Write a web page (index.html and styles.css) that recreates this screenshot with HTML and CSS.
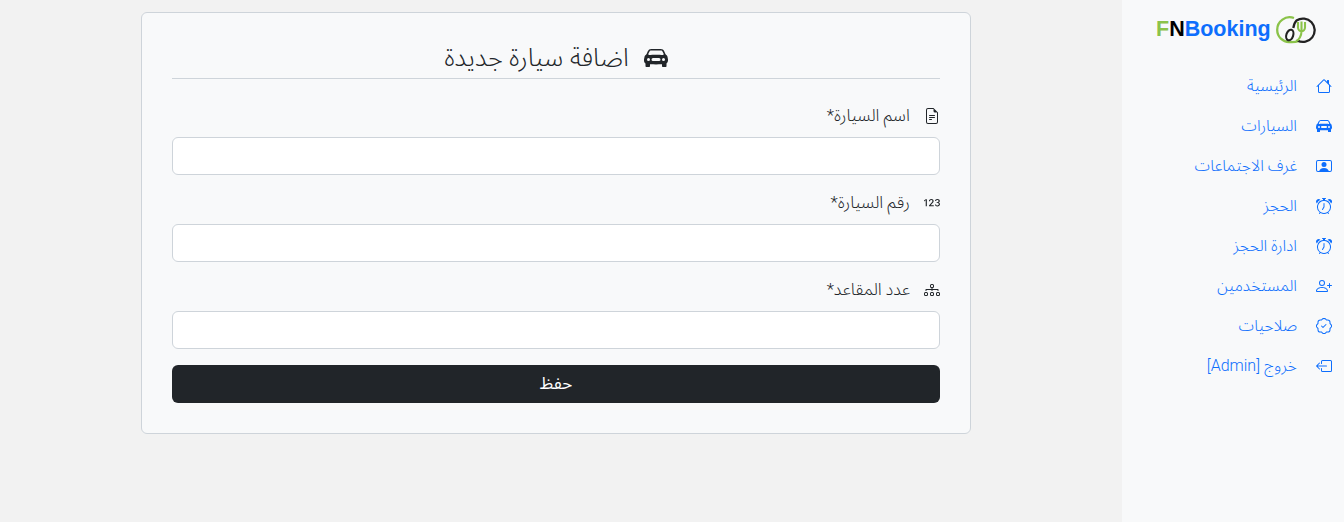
FILE: index.html
```html
<!DOCTYPE html>
<html lang="ar" dir="rtl">
<head>
<meta charset="utf-8">
<title>اضافة سيارة جديدة</title>
<link rel="stylesheet" href="styles.css">
</head>
<body>
<div class="app">
  <aside class="sidebar">
    <div class="brand" dir="ltr">
      <span class="brand-text"><span class="f">F</span><span class="n">N</span><span class="b">Booking</span></span>
      <svg class="brand-logo" viewBox="0 0 40 28" width="40" height="28">
        <path d="M18 2A12.500 12.500 0 0 0 1.200 14C1.200 21 7 26 13 26C17 26.500 20 26 23.500 25" fill="none" stroke="#8bc34a" stroke-width="2.300"/>
        <path d="M21.500 24.600A11.700 11.700 0 1 0 20.500 4.500C18.500 6.500 17.800 9 17.300 12" fill="none" stroke="#222" stroke-width="2.300"/>
        <ellipse cx="13.800" cy="19" rx="3.400" ry="5.400" transform="rotate(18 13.800 19)" fill="none" stroke="#222" stroke-width="2.100"/>
        <path d="M22 6v5.500c0 2.200 1.800 3.600 3.500 3.600s3.500-1.400 3.500-3.600V6M25.500 5.500v9.500C25.500 20 23 24 20 25" fill="none" stroke="#8bc34a" stroke-width="2.100"/>
      </svg>
    </div>
    <nav class="menu">
      <a class="menu-item" href="#"><svg class="ico" viewBox="0 0 16 16"><path d="M8.707 1.5a1 1 0 0 0-1.414 0L.646 8.146a.5.5 0 0 0 .708.708L2 8.207V13.5A1.5 1.5 0 0 0 3.5 15h9a1.5 1.5 0 0 0 1.5-1.5V8.207l.646.647a.5.5 0 0 0 .708-.708L13 5.793V2.5a.5.5 0 0 0-.5-.5h-1a.5.5 0 0 0-.5.5v1.293L8.707 1.5ZM13 7.207V13.5a.5.5 0 0 1-.5.5h-9a.5.5 0 0 1-.5-.5V7.207l5-5 5 5Z"/></svg><span>الرئيسية</span></a>
      <a class="menu-item" href="#"><svg class="ico" viewBox="0 0 16 16"><path d="M2.52 3.515A2.5 2.5 0 0 1 4.82 2h6.362c1 0 1.904.596 2.298 1.515l.792 1.848c.075.175.21.319.38.404.5.25.855.715.965 1.262l.335 1.679c.033.161.049.325.049.49v.413c0 .814-.39 1.543-1 1.997V13.5a.5.5 0 0 1-.5.5h-2a.5.5 0 0 1-.5-.5v-1.338c-1.292.048-2.745.088-4 .088s-2.708-.04-4-.088V13.5a.5.5 0 0 1-.5.5h-2a.5.5 0 0 1-.5-.5v-1.892c-.61-.454-1-1.183-1-1.997v-.413a2.5 2.5 0 0 1 .049-.49l.335-1.68c.11-.546.465-1.012.964-1.261a.807.807 0 0 0 .381-.404l.792-1.848ZM3 10a1 1 0 1 0 0-2 1 1 0 0 0 0 2Zm10 0a1 1 0 1 0 0-2 1 1 0 0 0 0 2ZM6 8a1 1 0 0 0 0 2h4a1 1 0 1 0 0-2H6ZM2.906 5.189a.51.51 0 0 0 .497.731c.91-.073 3.35-.17 4.597-.17 1.247 0 3.688.097 4.597.17a.51.51 0 0 0 .497-.731l-.956-1.913A.5.5 0 0 0 11.691 3H4.309a.5.5 0 0 0-.447.276L2.906 5.19Z"/></svg><span>السيارات</span></a>
      <a class="menu-item" href="#"><svg class="ico" viewBox="0 0 16 16"><path d="M8 9.05a2.5 2.5 0 1 0 0-5 2.5 2.5 0 0 0 0 5Z"/><path d="M2 2a2 2 0 0 0-2 2v8a2 2 0 0 0 2 2h12a2 2 0 0 0 2-2V4a2 2 0 0 0-2-2H2Zm10.798 11c-.453-1.27-1.76-3-4.798-3-3.037 0-4.345 1.73-4.798 3H2a1 1 0 0 1-1-1V4a1 1 0 0 1 1-1h12a1 1 0 0 1 1 1v8a1 1 0 0 1-1 1h-1.202Z"/></svg><span>غرف الاجتماعات</span></a>
      <a class="menu-item" href="#"><svg class="ico" viewBox="0 0 16 16"><path d="M8.5 5.5a.5.5 0 0 0-1 0v3.362l-1.429 2.38a.5.5 0 1 0 .858.515l1.5-2.5A.5.5 0 0 0 8.5 9V5.5z"/><path d="M6.5 0a.5.5 0 0 0 0 1H7v1.07a7.001 7.001 0 0 0-3.273 12.474l-.602.602a.5.5 0 0 0 .707.708l.746-.746A6.97 6.97 0 0 0 8 16a6.97 6.97 0 0 0 3.422-.892l.746.746a.5.5 0 0 0 .707-.708l-.601-.602A7.001 7.001 0 0 0 9 2.07V1h.5a.5.5 0 0 0 0-1h-3zm1.038 3.018a6.093 6.093 0 0 1 .924 0 6 6 0 1 1-.924 0zM0 3.5c0 .753.333 1.429.86 1.887A8.035 8.035 0 0 1 4.387 1.86 2.5 2.5 0 0 0 0 3.5zM13.5 1c-.753 0-1.429.333-1.887.86a8.035 8.035 0 0 1 3.527 3.527A2.5 2.5 0 0 0 13.5 1z"/></svg><span>الحجز</span></a>
      <a class="menu-item" href="#"><svg class="ico" viewBox="0 0 16 16"><path d="M8.5 5.5a.5.5 0 0 0-1 0v3.362l-1.429 2.38a.5.5 0 1 0 .858.515l1.5-2.5A.5.5 0 0 0 8.5 9V5.5z"/><path d="M6.5 0a.5.5 0 0 0 0 1H7v1.07a7.001 7.001 0 0 0-3.273 12.474l-.602.602a.5.5 0 0 0 .707.708l.746-.746A6.97 6.97 0 0 0 8 16a6.97 6.97 0 0 0 3.422-.892l.746.746a.5.5 0 0 0 .707-.708l-.601-.602A7.001 7.001 0 0 0 9 2.07V1h.5a.5.5 0 0 0 0-1h-3zm1.038 3.018a6.093 6.093 0 0 1 .924 0 6 6 0 1 1-.924 0zM0 3.5c0 .753.333 1.429.86 1.887A8.035 8.035 0 0 1 4.387 1.86 2.5 2.5 0 0 0 0 3.5zM13.5 1c-.753 0-1.429.333-1.887.86a8.035 8.035 0 0 1 3.527 3.527A2.5 2.5 0 0 0 13.5 1z"/></svg><span>ادارة الحجز</span></a>
      <a class="menu-item" href="#"><svg class="ico" viewBox="0 0 16 16"><path d="M6 8a3 3 0 1 0 0-6 3 3 0 0 0 0 6zm2-3a2 2 0 1 1-4 0 2 2 0 0 1 4 0zm4 8c0 1-1 1-1 1H1s-1 0-1-1 1-4 6-4 6 3 6 4zm-1-.004c-.001-.246-.154-.986-.832-1.664C9.516 10.68 8.289 10 6 10c-2.29 0-3.516.68-4.168 1.332-.678.678-.83 1.418-.832 1.664h10z"/><path d="M13.5 5a.5.5 0 0 1 .5.5V7h1.5a.5.5 0 0 1 0 1H14v1.5a.5.5 0 0 1-1 0V8h-1.5a.5.5 0 0 1 0-1H13V5.5a.5.5 0 0 1 .5-.5z"/></svg><span>المستخدمين</span></a>
      <a class="menu-item" href="#"><svg class="ico" viewBox="0 0 16 16"><path d="M10.354 6.146a.5.5 0 0 1 0 .708l-3 3a.5.5 0 0 1-.708 0l-1.5-1.5a.5.5 0 1 1 .708-.708L7 8.793l2.646-2.647a.5.5 0 0 1 .708 0z"/><path d="m10.273 2.513-.921-.944.715-.698.622.637.89-.011a2.89 2.89 0 0 1 2.924 2.924l-.01.89.636.622a2.89 2.89 0 0 1 0 4.134l-.637.622.011.89a2.89 2.89 0 0 1-2.924 2.924l-.89-.01-.622.636a2.89 2.89 0 0 1-4.134 0l-.622-.637-.89.011a2.89 2.89 0 0 1-2.924-2.924l.01-.89-.636-.622a2.89 2.89 0 0 1 0-4.134l.637-.622-.011-.89a2.89 2.89 0 0 1 2.924-2.924l.89.01.622-.636a2.89 2.89 0 0 1 4.134 0l-.715.698a1.89 1.89 0 0 0-2.704 0l-.92.944-1.32-.016a1.89 1.89 0 0 0-1.911 1.912l.016 1.318-.944.921a1.89 1.89 0 0 0 0 2.704l.944.92-.016 1.32a1.89 1.89 0 0 0 1.912 1.911l1.318-.016.921.944a1.89 1.89 0 0 0 2.704 0l.92-.944 1.32.016a1.89 1.89 0 0 0 1.911-1.912l-.016-1.318.944-.921a1.89 1.89 0 0 0 0-2.704l-.944-.92.016-1.32a1.89 1.89 0 0 0-1.912-1.911l-1.318.016z"/></svg><span>صلاحيات</span></a>
      <a class="menu-item" href="#"><svg class="ico" viewBox="0 0 16 16"><path d="M6 12.5a.5.5 0 0 0 .5.5h8a.5.5 0 0 0 .5-.5v-9a.5.5 0 0 0-.5-.5h-8a.5.5 0 0 0-.5.5v2a.5.5 0 0 1-1 0v-2A1.5 1.5 0 0 1 6.5 2h8A1.5 1.5 0 0 1 16 3.5v9a1.5 1.5 0 0 1-1.5 1.5h-8A1.5 1.5 0 0 1 5 12.5v-2a.5.5 0 0 1 1 0v2z"/><path d="M.146 8.354a.5.5 0 0 1 0-.708l3-3a.5.5 0 1 1 .708.708L1.707 7.5H10.5a.5.5 0 0 1 0 1H1.707l2.147 2.146a.5.5 0 0 1-.708.708l-3-3z"/></svg><span>خروج [Admin]</span></a>
    </nav>
  </aside>
  <main class="main">
    <form class="card">
      <h2 class="card-title"><svg class="title-ico" viewBox="0 0 16 16"><path d="M2.52 3.515A2.5 2.5 0 0 1 4.82 2h6.362c1 0 1.904.596 2.298 1.515l.792 1.848c.075.175.21.319.38.404.5.25.855.715.965 1.262l.335 1.679c.033.161.049.325.049.49v.413c0 .814-.39 1.543-1 1.997V13.5a.5.5 0 0 1-.5.5h-2a.5.5 0 0 1-.5-.5v-1.338c-1.292.048-2.745.088-4 .088s-2.708-.04-4-.088V13.5a.5.5 0 0 1-.5.5h-2a.5.5 0 0 1-.5-.5v-1.892c-.61-.454-1-1.183-1-1.997v-.413a2.5 2.5 0 0 1 .049-.49l.335-1.68c.11-.546.465-1.012.964-1.261a.807.807 0 0 0 .381-.404l.792-1.848ZM3 10a1 1 0 1 0 0-2 1 1 0 0 0 0 2Zm10 0a1 1 0 1 0 0-2 1 1 0 0 0 0 2ZM6 8a1 1 0 0 0 0 2h4a1 1 0 1 0 0-2H6ZM2.906 5.189a.51.51 0 0 0 .497.731c.91-.073 3.35-.17 4.597-.17 1.247 0 3.688.097 4.597.17a.51.51 0 0 0 .497-.731l-.956-1.913A.5.5 0 0 0 11.691 3H4.309a.5.5 0 0 0-.447.276L2.906 5.19Z"/></svg><span>اضافة سيارة جديدة</span></h2>
      <div class="field">
        <label class="field-label"><svg class="lab-ico" viewBox="0 0 16 16"><path d="M5.5 7a.5.5 0 0 0 0 1h5a.5.5 0 0 0 0-1h-5zM5 9.5a.5.5 0 0 1 .5-.5h5a.5.5 0 0 1 0 1h-5a.5.5 0 0 1-.5-.5zm0 2a.5.5 0 0 1 .5-.5h2a.5.5 0 0 1 0 1h-2a.5.5 0 0 1-.5-.5z"/><path d="M9.5 0H4a2 2 0 0 0-2 2v12a2 2 0 0 0 2 2h8a2 2 0 0 0 2-2V4.5L9.5 0zm0 1v2A1.5 1.5 0 0 0 11 4.5h2V14a1 1 0 0 1-1 1H4a1 1 0 0 1-1-1V2a1 1 0 0 1 1-1h5.5z"/></svg><span>اسم السيارة*</span></label>
        <input class="input" type="text">
      </div>
      <div class="field">
        <label class="field-label"><svg class="lab-ico" viewBox="0 0 16 16"><path d="M2.873 11.297V4.142H1.699L0 5.379v1.137l1.64-1.18h.06v5.961h1.174Zm3.213-5.09v-.063c0-.618.44-1.169 1.196-1.169.676 0 1.174.44 1.174 1.106 0 .624-.42 1.101-.807 1.526L4.99 10.553v.744h4.78v-.99H6.643v-.069L8.41 8.252c.65-.724 1.237-1.332 1.237-2.27C9.646 4.849 8.723 4 7.308 4c-1.573 0-2.36 1.064-2.36 2.15v.057h1.138Zm6.559 1.883h.786c.823 0 1.374.481 1.379 1.179.01.707-.55 1.216-1.421 1.21-.77-.005-1.326-.419-1.379-.953h-1.095c.042 1.053.938 1.918 2.464 1.918 1.478 0 2.642-.839 2.62-2.144-.02-1.143-.922-1.651-1.551-1.714v-.063c.535-.09 1.347-.66 1.326-1.678-.026-1.053-.933-1.855-2.359-1.845-1.5.005-2.317.88-2.348 1.898h1.116c.032-.498.498-.944 1.206-.944.703 0 1.206.435 1.206 1.07.005.64-.504 1.106-1.2 1.106h-.75v.96Z"/></svg><span>رقم السيارة*</span></label>
        <input class="input" type="text">
      </div>
      <div class="field">
        <label class="field-label"><svg class="lab-ico" viewBox="0 0 16 16"><path d="M6 3.5A1.5 1.5 0 0 1 7.5 2h1A1.5 1.5 0 0 1 10 3.5v1A1.5 1.5 0 0 1 8.5 6v1H14a.5.5 0 0 1 .5.5v1a.5.5 0 0 1-1 0V8h-5v.5a.5.5 0 0 1-1 0V8h-5v.5a.5.5 0 0 1-1 0v-1A.5.5 0 0 1 2 7h5.5V6A1.5 1.5 0 0 1 6 4.5v-1zM8.5 5a.5.5 0 0 0 .5-.5v-1a.5.5 0 0 0-.5-.5h-1a.5.5 0 0 0-.5.5v1a.5.5 0 0 0 .5.5h1zM0 11.5A1.5 1.5 0 0 1 1.5 10h1A1.5 1.5 0 0 1 4 11.5v1A1.5 1.5 0 0 1 2.5 14h-1A1.5 1.5 0 0 1 0 12.5v-1zm1.5-.5a.5.5 0 0 0-.5.5v1a.5.5 0 0 0 .5.5h1a.5.5 0 0 0 .5-.5v-1a.5.5 0 0 0-.5-.5h-1zm4.5.5A1.5 1.5 0 0 1 7.5 10h1a1.5 1.5 0 0 1 1.5 1.5v1A1.5 1.5 0 0 1 8.5 14h-1A1.5 1.5 0 0 1 6 12.5v-1zm1.5-.5a.5.5 0 0 0-.5.5v1a.5.5 0 0 0 .5.5h1a.5.5 0 0 0 .5-.5v-1a.5.5 0 0 0-.5-.5h-1zm4.5.5a1.5 1.5 0 0 1 1.5-1.5h1a1.5 1.5 0 0 1 1.5 1.5v1a1.5 1.5 0 0 1-1.5 1.5h-1a1.5 1.5 0 0 1-1.5-1.5v-1zm1.5-.5a.5.5 0 0 0-.5.5v1a.5.5 0 0 0 .5.5h1a.5.5 0 0 0 .5-.5v-1a.5.5 0 0 0-.5-.5h-1z"/></svg><span>عدد المقاعد*</span></label>
        <input class="input" type="text">
      </div>
      <button class="submit" type="button">حفظ</button>
    </form>
  </main>
</div>
</body>
</html>
```
FILE: styles.css
```css
* { box-sizing: border-box; }
html, body { margin: 0; height: 100%; }
body {
  background: #f2f2f2;
  color: #212529;
  font-family: Roboto, "Noto Sans Arabic", "Noto Sans", "DejaVu Sans", sans-serif;
  font-size: 16px;
  font-weight: 350;
}
.app { display: flex; height: 522px; overflow: hidden; }
.sidebar { width: 222px; flex: none; background: #f8f9fa; }
.brand {
  display: flex; align-items: center; justify-content: flex-start;
  height: 60px; padding-left: 34px; gap: 5px;
}
.brand-text {
  font-family: "Liberation Sans", Arial, sans-serif;
  font-size: 21.500px; font-weight: 700; line-height: 1;
}
.f { color: #8bc34a; }
.n { color: #000; }
.b { color: #0d6efd; }
.brand-logo { display: block; }
.menu { display: flex; flex-direction: column; padding: 6px 12px 0 0; }
.menu-item {
  display: flex; align-items: center; gap: 19px; height: 40px;
  color: #0d6efd; text-decoration: none; font-size: 16px;
}
.ico { width: 16px; height: 16px; fill: currentColor; flex: none; }
.main { flex: 1; padding: 12px 151px 0 141px; }
.card {
  height: 422px; background: #f8f9fa; border: 1px solid #ced4da;
  border-radius: 6px; padding: 30px;
}
.card-title {
  display: flex; align-items: center; justify-content: center; gap: 15px;
  margin: 0 0 25px; height: 36px; padding-bottom: 6px; font-size: 25.500px; font-weight: 350;
  border-bottom: 1px solid #ced4da;
}
.title-ico { width: 24px; height: 24px; fill: #212529; }
.field { margin-bottom: 16px; }
.field-label { display: flex; align-items: center; gap: 14px; height: 24px; margin-bottom: 9px; font-size: 17px; }
.lab-ico { width: 16px; height: 16px; fill: #212529; flex: none; }
.input {
  display: block; width: 100%; height: 38px; background: #fff;
  border: 1px solid #ced4da; border-radius: 6px;
}
.submit {
  display: block; width: 100%; height: 38px; background: #212529; color: #fff;
  border: 0; border-radius: 6px; font: inherit; font-size: 17px; font-weight: 400;
}
```
